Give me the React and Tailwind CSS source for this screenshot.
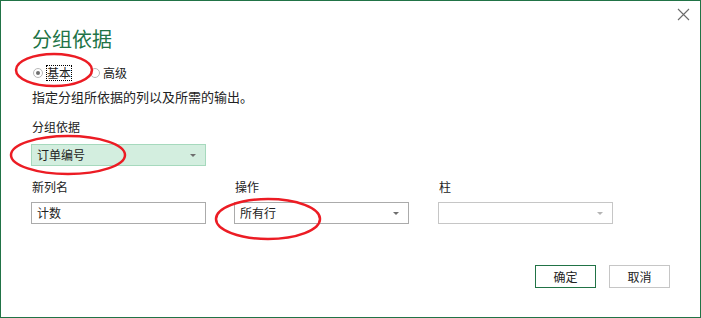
import React from 'react';

const font = { fontFamily: '"Microsoft YaHei", "Noto Sans CJK SC", "Noto Sans", sans-serif' };

const Arrow = ({ light }) => (
  <span
    className={`w-0 h-0 border-l-[3px] border-r-[3px] border-t-[3px] border-l-transparent border-r-transparent ${
      light ? 'border-t-[#b4b4b4]' : 'border-t-[#6e6e6e]'
    }`}
  />
);

const Radio = ({ checked }) => (
  <span className="w-[10px] h-[10px] rounded-full border border-[#b8b8b8] bg-white flex items-center justify-center">
    {checked && <span className="w-[4px] h-[4px] rounded-full bg-[#707070]" />}
  </span>
);

const App = () => {
  return (
    <div
      className="relative w-[701px] h-[318px] bg-white border border-[#217346] text-[#222] overflow-hidden"
      style={font}
    >
      {/* close */}
      <button className="absolute top-[7px] right-[10px] w-[13px] h-[13px] text-[#6b6b6b]">
        <svg viewBox="0 0 13 13" className="w-[13px] h-[13px]">
          <path d="M1 1 L12 12 M12 1 L1 12" stroke="currentColor" strokeWidth="1.1" fill="none" />
        </svg>
      </button>

      <div className="pl-[30px] pt-[25px] pr-[30px]">
        <h1 className="text-[20px] leading-[26px] text-[#217346] pl-[1px]">分组依据</h1>

        <div className="flex items-center h-[18px] mt-[12px] text-[12px] leading-[14px]">
          <span className="ml-[2px]"><Radio checked /></span>
          <span className="ml-[3px] border border-dotted border-black">基本</span>
          <span className="ml-[18px]"><Radio /></span>
          <span className="ml-[3px]">高级</span>
        </div>

        <p className="mt-[6px] text-[13px] leading-[17px] pl-[1px]">指定分组所依据的列以及所需的输出。</p>

        <div className="mt-[14px] text-[12px] leading-[16px] pl-[1px]">分组依据</div>
        <div className="mt-[9px] w-[175px] h-[22px] bg-[#d3eedf] border border-[#a6d9bd] flex items-center justify-between pl-[5px] pr-[9px] text-[12px]">
          <span>订单编号</span>
          <Arrow />
        </div>

        <div className="mt-[13px] flex gap-[28px] text-[12px]">
          <div className="w-[175px]">
            <div className="leading-[16px] pl-[1px]">新列名</div>
            <div className="mt-[7px] h-[22px] border border-[#ababab] flex items-center pl-[5px]">计数</div>
          </div>
          <div className="w-[175px]">
            <div className="leading-[16px] pl-[1px]">操作</div>
            <div className="mt-[7px] h-[22px] border border-[#ababab] flex items-center justify-between pl-[5px] pr-[9px]">
              <span>所有行</span>
              <Arrow />
            </div>
          </div>
          <div className="w-[175px] ml-[1px]">
            <div className="leading-[16px] pl-[1px]">柱</div>
            <div className="mt-[7px] h-[22px] border border-[#c6c6c6] flex items-center justify-end pr-[9px]">
              <Arrow light />
            </div>
          </div>
        </div>

        <div className="mt-[41px] flex justify-end gap-[13px] text-[12px]">
          <button className="w-[61px] h-[23px] border border-[#217346] bg-white text-[#222]">确定</button>
          <button className="w-[61px] h-[23px] border border-[#c6c6c6] bg-white text-[#222]">取消</button>
        </div>
      </div>

      {/* red annotation circles */}
      <svg className="absolute inset-0 pointer-events-none" width="701" height="318">
        <ellipse cx="53" cy="69" rx="38" ry="16" stroke="#ec1c24" strokeWidth="2.5" fill="none" />
        <ellipse cx="67" cy="154" rx="57" ry="19" stroke="#ec1c24" strokeWidth="2.5" fill="none" />
        <ellipse cx="267" cy="218" rx="52" ry="20" stroke="#ec1c24" strokeWidth="2.5" fill="none" />
      </svg>
    </div>
  );
};

export default App;
